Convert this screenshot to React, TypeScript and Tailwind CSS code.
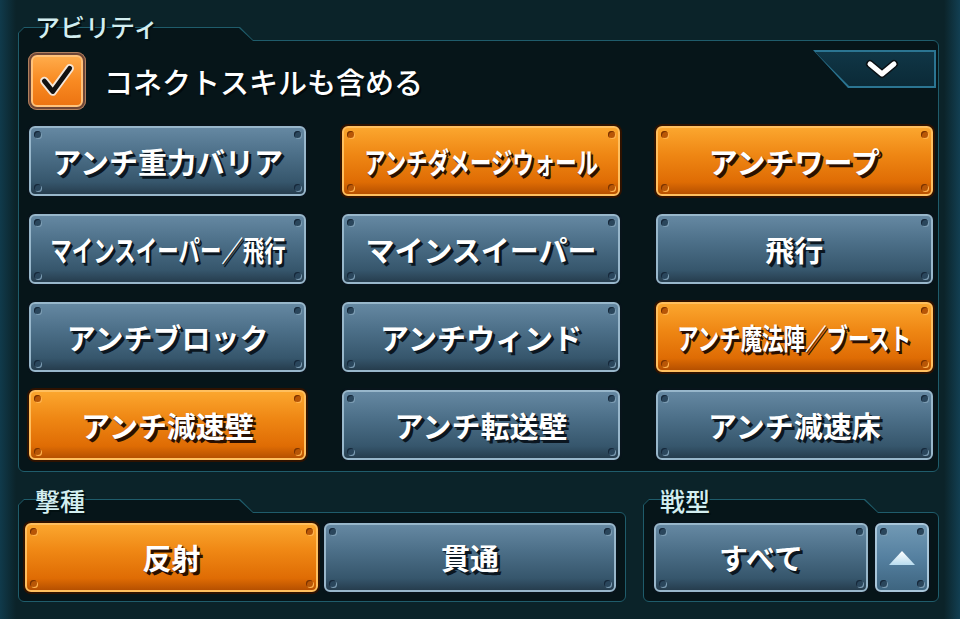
import clsx from 'clsx';

interface Ability {
  label: string;
  on: boolean;
  squeeze?: boolean;
}

const abilities: Ability[] = [
  { label: 'アンチ重力バリア', on: false },
  { label: 'アンチダメージウォール', on: true, squeeze: true },
  { label: 'アンチワープ', on: true },
  { label: 'マインスイーパー／飛行', on: false, squeeze: true },
  { label: 'マインスイーパー', on: false },
  { label: '飛行', on: false },
  { label: 'アンチブロック', on: false },
  { label: 'アンチウィンド', on: false },
  { label: 'アンチ魔法陣／ブースト', on: true, squeeze: true },
  { label: 'アンチ減速壁', on: true },
  { label: 'アンチ転送壁', on: false },
  { label: 'アンチ減速床', on: false },
];

const Rivets = ({ on }: { on: boolean }) => {
  const dot = clsx(
    'absolute h-[7px] w-[7px] rounded-full',
    on
      ? 'bg-[#b85606] shadow-[inset_1px_1px_0_#7a3300,1px_1px_0_#ffb450]'
      : 'bg-[#2a465c] shadow-[inset_1px_1px_0_#16283a,1px_1px_0_#7d9db4]',
  );
  return (
    <>
      <span className={clsx(dot, 'left-[3px] top-[3px]')} />
      <span className={clsx(dot, 'right-[3px] top-[3px]')} />
      <span className={clsx(dot, 'bottom-[3px] left-[3px]')} />
      <span className={clsx(dot, 'bottom-[3px] right-[3px]')} />
    </>
  );
};

interface BtnProps {
  label: string;
  on: boolean;
  squeeze?: boolean;
  className?: string;
}

const Btn = ({ label, on, squeeze, className }: BtnProps) => (
  <div
    className={clsx(
      'rounded-[8px] p-[2px]',
      on ? 'bg-[#2f1200]' : 'bg-[#08141b]',
      className,
    )}
  >
    <div
      className={clsx(
        'relative flex h-full items-center justify-center overflow-hidden rounded-[6px] border-2',
        on
          ? 'border-[#ffbf5e] bg-[linear-gradient(180deg,#fba62e_0%,#ef8714_40%,#df6c04_82%,#b65000_100%)]'
          : 'border-[#98b7cb] bg-[linear-gradient(180deg,#6588a2_0%,#4c6f88_40%,#36566c_82%,#263d4e_100%)]',
      )}
    >
      <Rivets on={on} />
      <span
        className={clsx(
          'inline-block whitespace-nowrap text-[29px] font-bold leading-none text-white',
          squeeze && 'scale-x-[0.74]',
          on
            ? '[text-shadow:3px_3px_0_#2a0f00,1px_1px_1px_#2a0f00]'
            : '[text-shadow:3px_3px_0_#0b1620,1px_1px_1px_#0b1620]',
        )}
      >
        {label}
      </span>
    </div>
  </div>
);

const Tab = () => (
  <div className="relative z-10 -mb-px h-[14px] w-[236px] bg-[#1f5c6b] [clip-path:polygon(6px_0,222px_0,236px_100%,0_100%,0_6px)]">
    <div className="absolute bottom-0 left-[1px] right-[1px] top-[1px] bg-[#061519] [clip-path:polygon(5px_0,220px_0,234px_100%,0_100%,0_5px)]" />
  </div>
);

const Label = ({ text, shift }: { text: string; shift: string }) => (
  <div
    className={clsx(
      'relative z-20 h-[28px] pl-[17px] text-[25px] font-medium leading-[28px] text-[#d3eef0] [text-shadow:2px_2px_0_#021012]',
      shift,
    )}
  >
    {text}
  </div>
);

const CheckBox = () => (
  <div className="ml-[1px] h-[58px] w-[58px] rounded-[9px] bg-[#6e4536] p-[3px] shadow-[inset_0_0_0_1px_#b0805e]">
    <div className="flex h-full w-full items-center justify-center rounded-[6px] border-2 border-[#ffc27a] bg-[linear-gradient(180deg,#ffab4a_0%,#f88a22_50%,#ec7412_100%)]">
      <svg width="36" height="36" viewBox="0 0 34 34">
        <path d="M5 17 L13 27 L29 5" fill="none" stroke="#f4e6d8" strokeWidth="8" strokeLinecap="round" strokeLinejoin="round" />
        <path d="M5 17 L13 27 L29 5" fill="none" stroke="#111" strokeWidth="4.5" strokeLinecap="round" strokeLinejoin="round" />
      </svg>
    </div>
  </div>
);

const Dropdown = () => (
  <div className="-mr-[1px] -mt-[2px] ml-auto h-[38px] w-[123px] self-start bg-[#2b7592] p-[2px] [clip-path:polygon(0_0,100%_0,100%_100%,35px_100%)]">
    <div className="flex h-full w-full items-center justify-end bg-[linear-gradient(180deg,#103646,#0b2a37)] pr-[34px] [clip-path:polygon(0_0,100%_0,100%_100%,34px_100%)]">
      <svg width="36" height="22" viewBox="0 0 36 22">
        <path d="M6 6 L18 16 L30 6" fill="none" stroke="#0a1014" strokeWidth="8" strokeLinecap="round" strokeLinejoin="round" />
        <path d="M6 6 L18 16 L30 6" fill="none" stroke="#ffffff" strokeWidth="5" strokeLinecap="round" strokeLinejoin="round" />
      </svg>
    </div>
  </div>
);

const App = () => {
  return (
    <div className="h-[619px] w-[960px] overflow-hidden bg-[linear-gradient(90deg,#103a4b_0px,#0b2329_16px,#0b2329_944px,#123f52_960px)] pl-[18px] pr-[21px] pt-[12px] [font-family:'Noto_Sans_CJK_JP','Noto_Sans',sans-serif]">
      {/* アビリティ */}
      <Label text="アビリティ" shift="-mb-[13px]" />
      <Tab />
      <div className="rounded-[6px] rounded-tl-none border border-[#1f5c6b] bg-[#061519] pb-[9px] pl-[8px] pr-[3px] pt-[11px]">
        <div className="flex h-[58px] items-center">
          <CheckBox />
          <span className="ml-[18px] text-[29px] font-medium leading-none text-white [text-shadow:2px_2px_0_#020a0c]">
            コネクトスキルも含める
          </span>
          <Dropdown />
        </div>
        <div className="mt-[14px] grid grid-cols-3 gap-x-[32px] gap-y-[14px]">
          {abilities.map((a) => (
            <Btn key={a.label} label={a.label} on={a.on} squeeze={a.squeeze} className="h-[74px]" />
          ))}
        </div>
      </div>

      <div className="mt-[14px] flex gap-[17px]">
        {/* 撃種 */}
        <div className="w-[608px]">
          <Label text="撃種" shift="-mb-[15px]" />
          <Tab />
          <div className="flex gap-[2px] rounded-[6px] rounded-tl-none border border-[#1f5c6b] bg-[#061519] pb-[7px] pl-[4px] pr-[7px] pt-[8px]">
            <Btn label="反射" on className="h-[73px] w-[297px]" />
            <Btn label="貫通" on={false} className="h-[73px] flex-1" />
          </div>
        </div>

        {/* 戦型 */}
        <div className="flex-1">
          <Label text="戦型" shift="-mb-[15px]" />
          <Tab />
          <div className="flex gap-[3px] rounded-[6px] rounded-tl-none border border-[#1f5c6b] bg-[#061519] pb-[7px] pl-[8px] pr-[7px] pt-[8px]">
            <Btn label="すべて" on={false} className="h-[73px] flex-1" />
            <div className="h-[73px] w-[58px] rounded-[8px] bg-[#08141b] p-[2px]">
              <div className="relative flex h-full items-center justify-center rounded-[6px] border-2 border-[#a8c6da] bg-[linear-gradient(180deg,#7199b4_0%,#5580a0_50%,#3e6580_100%)]">
                <Rivets on={false} />
                <svg width="28" height="16" viewBox="0 0 28 16">
                  <defs>
                    <linearGradient id="tri" x1="0" y1="0" x2="0" y2="1">
                      <stop offset="0" stopColor="#ffffff" />
                      <stop offset="1" stopColor="#b9dcef" />
                    </linearGradient>
                  </defs>
                  <polygon points="14,1 27,15 1,15" fill="url(#tri)" />
                </svg>
              </div>
            </div>
          </div>
        </div>
      </div>
    </div>
  );
};

export default App;
